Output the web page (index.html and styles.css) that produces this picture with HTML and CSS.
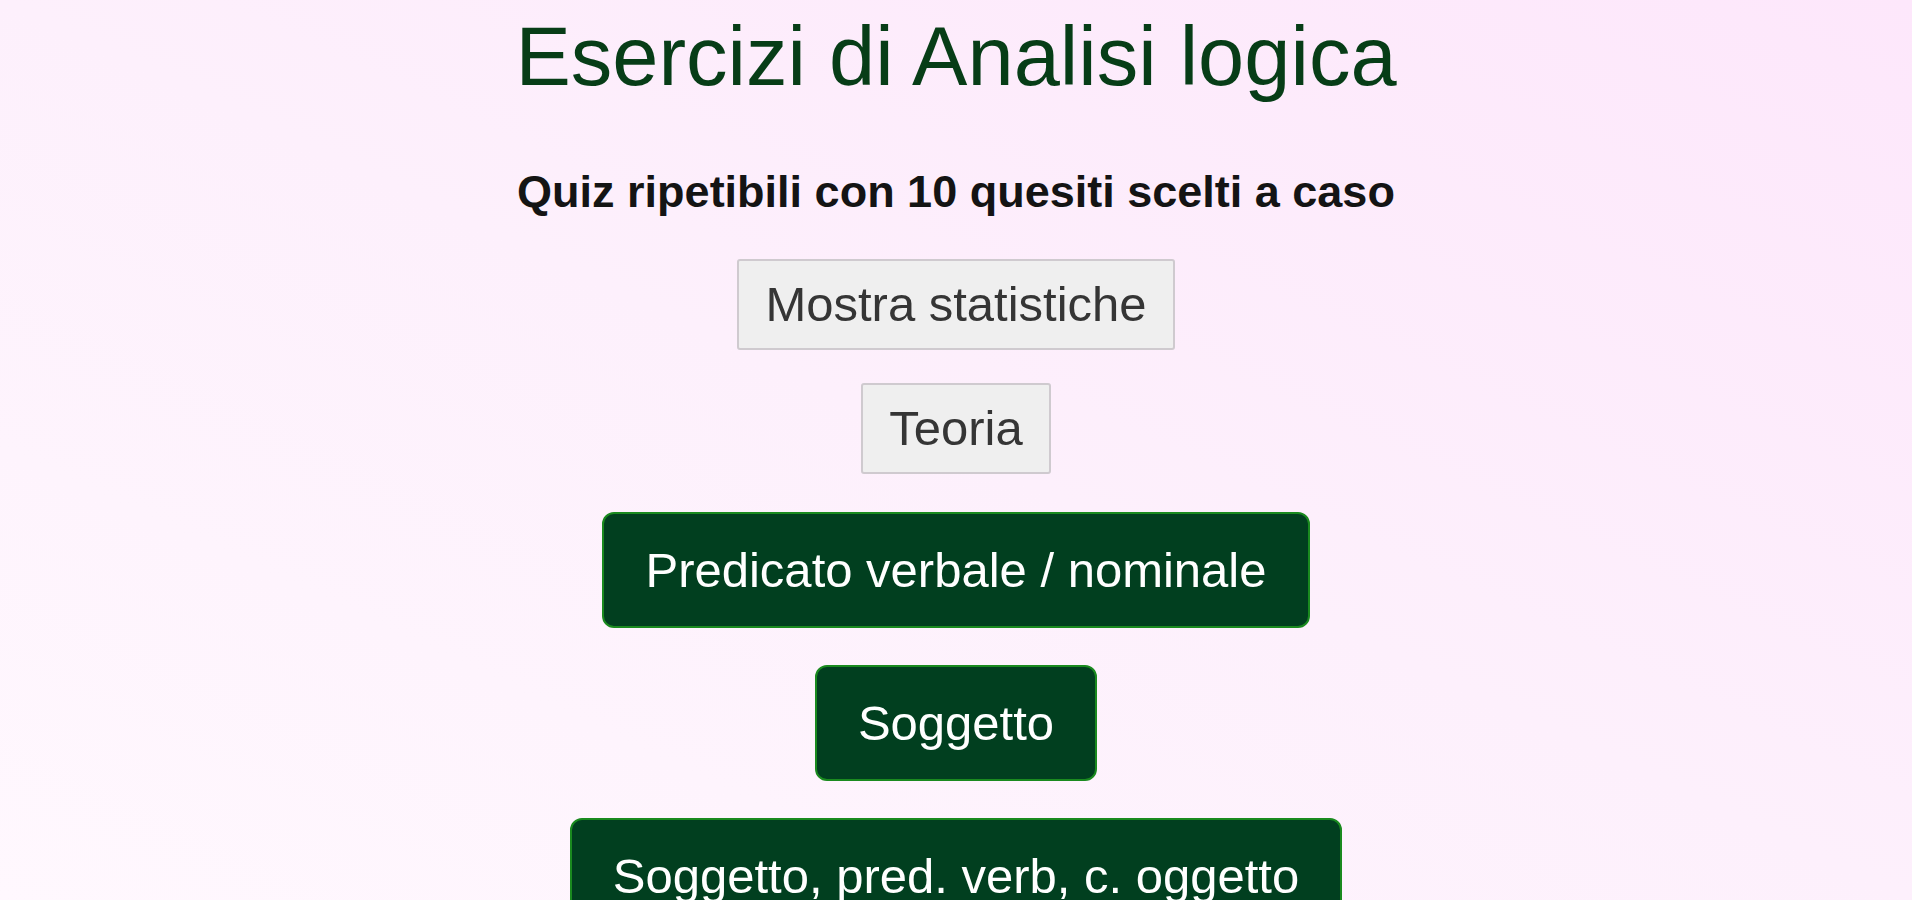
FILE: index.html
```html
<!DOCTYPE html>
<html lang="it">
<head>
<meta charset="utf-8">
<title>Esercizi di Analisi logica</title>
<link rel="stylesheet" href="styles.css">
</head>
<body>
<main class="page">
  <h1 class="title">Esercizi di Analisi logica</h1>
  <p class="subtitle">Quiz ripetibili con 10 quesiti scelti a caso</p>
  <div class="tools">
    <button class="btn-gray">Mostra statistiche</button>
    <button class="btn-gray">Teoria</button>
  </div>
  <div class="quizzes">
    <button class="btn-green">Predicato verbale / nominale</button>
    <button class="btn-green">Soggetto</button>
    <button class="btn-green">Soggetto, pred. verb, c. oggetto</button>
  </div>
</main>
</body>
</html>
```
FILE: styles.css
```css
html, body {
  margin: 0;
  padding: 0;
  height: 100%;
  overflow: hidden;
}
body {
  background: linear-gradient(to bottom left, #fde7fb 0%, #fdf0fc 50%, #fff8fe 100%);
  font-family: "Liberation Sans", Arial, sans-serif;
}
.page {
  display: flex;
  flex-direction: column;
  align-items: center;
  padding-top: 9px;
}
.title {
  margin: 0;
  font-size: 83px;
  line-height: 95px;
  font-weight: normal;
  color: #073d17;
}
.subtitle {
  margin: 62px 0 0;
  font-size: 45px;
  line-height: 52px;
  font-weight: bold;
  color: #141414;
}
.tools {
  display: flex;
  flex-direction: column;
  align-items: center;
  gap: 33px;
  margin-top: 41px;
}
.btn-gray {
  font-family: "Liberation Sans", Arial, sans-serif;
  font-size: 49px;
  line-height: 55px;
  padding: 16px 26px;
  color: #353535;
  background: #efefef;
  border: 2px solid #cfcacf;
  border-radius: 3px;
}
.quizzes {
  display: flex;
  flex-direction: column;
  align-items: center;
  gap: 37px;
  margin-top: 38px;
}
.btn-green {
  font-family: "Liberation Sans", Arial, sans-serif;
  font-size: 49px;
  line-height: 56px;
  padding: 28px 41px;
  color: #ffffff;
  background: #013f1f;
  border: 2px solid #1a8a1f;
  border-radius: 12px;
}
```
